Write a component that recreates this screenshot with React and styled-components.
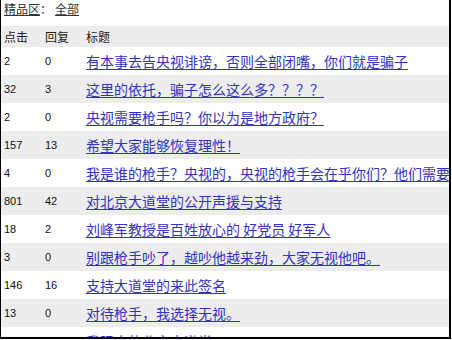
import React from "react";
import styled, { createGlobalStyle } from "styled-components";

const Global = createGlobalStyle`
  html, body { margin: 0; padding: 0; background: #fff; overflow: hidden; }
  body { font-family: "Noto Sans CJK SC", "Liberation Sans", sans-serif; }
`;

const Frame = styled.div`
  box-sizing: border-box;
  width: 451px;
  height: 339px;
  border-left: 1px solid #000;
  border-right: 2px solid #000;
  border-bottom: 2px solid #000;
  overflow: hidden;
  background: #fff;
`;

const Filter = styled.div`
  box-sizing: border-box;
  height: 26px;
  padding: 2px 0 0 3px;
  font-size: 12px;
  line-height: 14px;
  color: #333;
  white-space: nowrap;
`;

const FilterLink = styled.a`
  color: #333;
  text-decoration: underline;
  margin-left: ${(p) => p.$gap || 0}px;
`;

const Table = styled.div`
  display: flex;
  flex-direction: column;
  width: 600px;
`;

const Row = styled.div`
  display: grid;
  grid-template-columns: 41px 41px 1fr;
  align-items: center;
  height: ${(p) => (p.$head ? 21 : 28)}px;
  background: ${(p) => (p.$gray ? "#ededed" : "#fff")};
`;

const HeadCell = styled.div`
  padding-left: 3px;
  font-size: 12px;
  line-height: 14px;
  color: #222;
  white-space: nowrap;
`;

const NumCell = styled.div`
  padding-left: 3px;
  font-family: "Liberation Sans", sans-serif;
  font-size: 11px;
  color: #111;
`;

const TitleCell = styled.div`
  padding-left: 3px;
  white-space: nowrap;
  font-size: 14px;
  line-height: 16px;
`;

const TitleLink = styled.a`
  color: #3232c4;
  text-decoration: underline;
  text-underline-offset: 2px;
`;

const rows = [
  ["2", "0", "有本事去告央视诽谤，否则全部闭嘴，你们就是骗子"],
  ["32", "3", "这里的依托，骗子怎么这么多？？？？"],
  ["2", "0", "央视需要枪手吗？你以为是地方政府？"],
  ["157", "13", "希望大家能够恢复理性！"],
  ["4", "0", "我是谁的枪手？央视的，央视的枪手会在乎你们？他们需要的是收视率"],
  ["801", "42", "对北京大道堂的公开声援与支持"],
  ["18", "2", "刘峰军教授是百姓放心的 好党员 好军人"],
  ["3", "0", "别跟枪手吵了，越吵他越来劲，大家无视他吧。"],
  ["146", "16", "支持大道堂的来此签名"],
  ["13", "0", "对待枪手，我选择无视。"],
  ["3721", "58", "我眼中的北京大道堂"],
];

export default function App() {
  return (
    <>
      <Global />
      <Frame>
        <Filter>
          <FilterLink href="#">精品区</FilterLink>：
          <FilterLink href="#" $gap={3}>全部</FilterLink>
        </Filter>
        <Table>
          <Row $head $gray>
            <HeadCell>点击</HeadCell>
            <HeadCell>回复</HeadCell>
            <HeadCell>标题</HeadCell>
          </Row>
          {rows.map(([clicks, replies, title], i) => (
            <Row key={i} $gray={i % 2 === 1}>
              <NumCell>{clicks}</NumCell>
              <NumCell>{replies}</NumCell>
              <TitleCell>
                <TitleLink href="#">{title}</TitleLink>
              </TitleCell>
            </Row>
          ))}
        </Table>
      </Frame>
    </>
  );
}
